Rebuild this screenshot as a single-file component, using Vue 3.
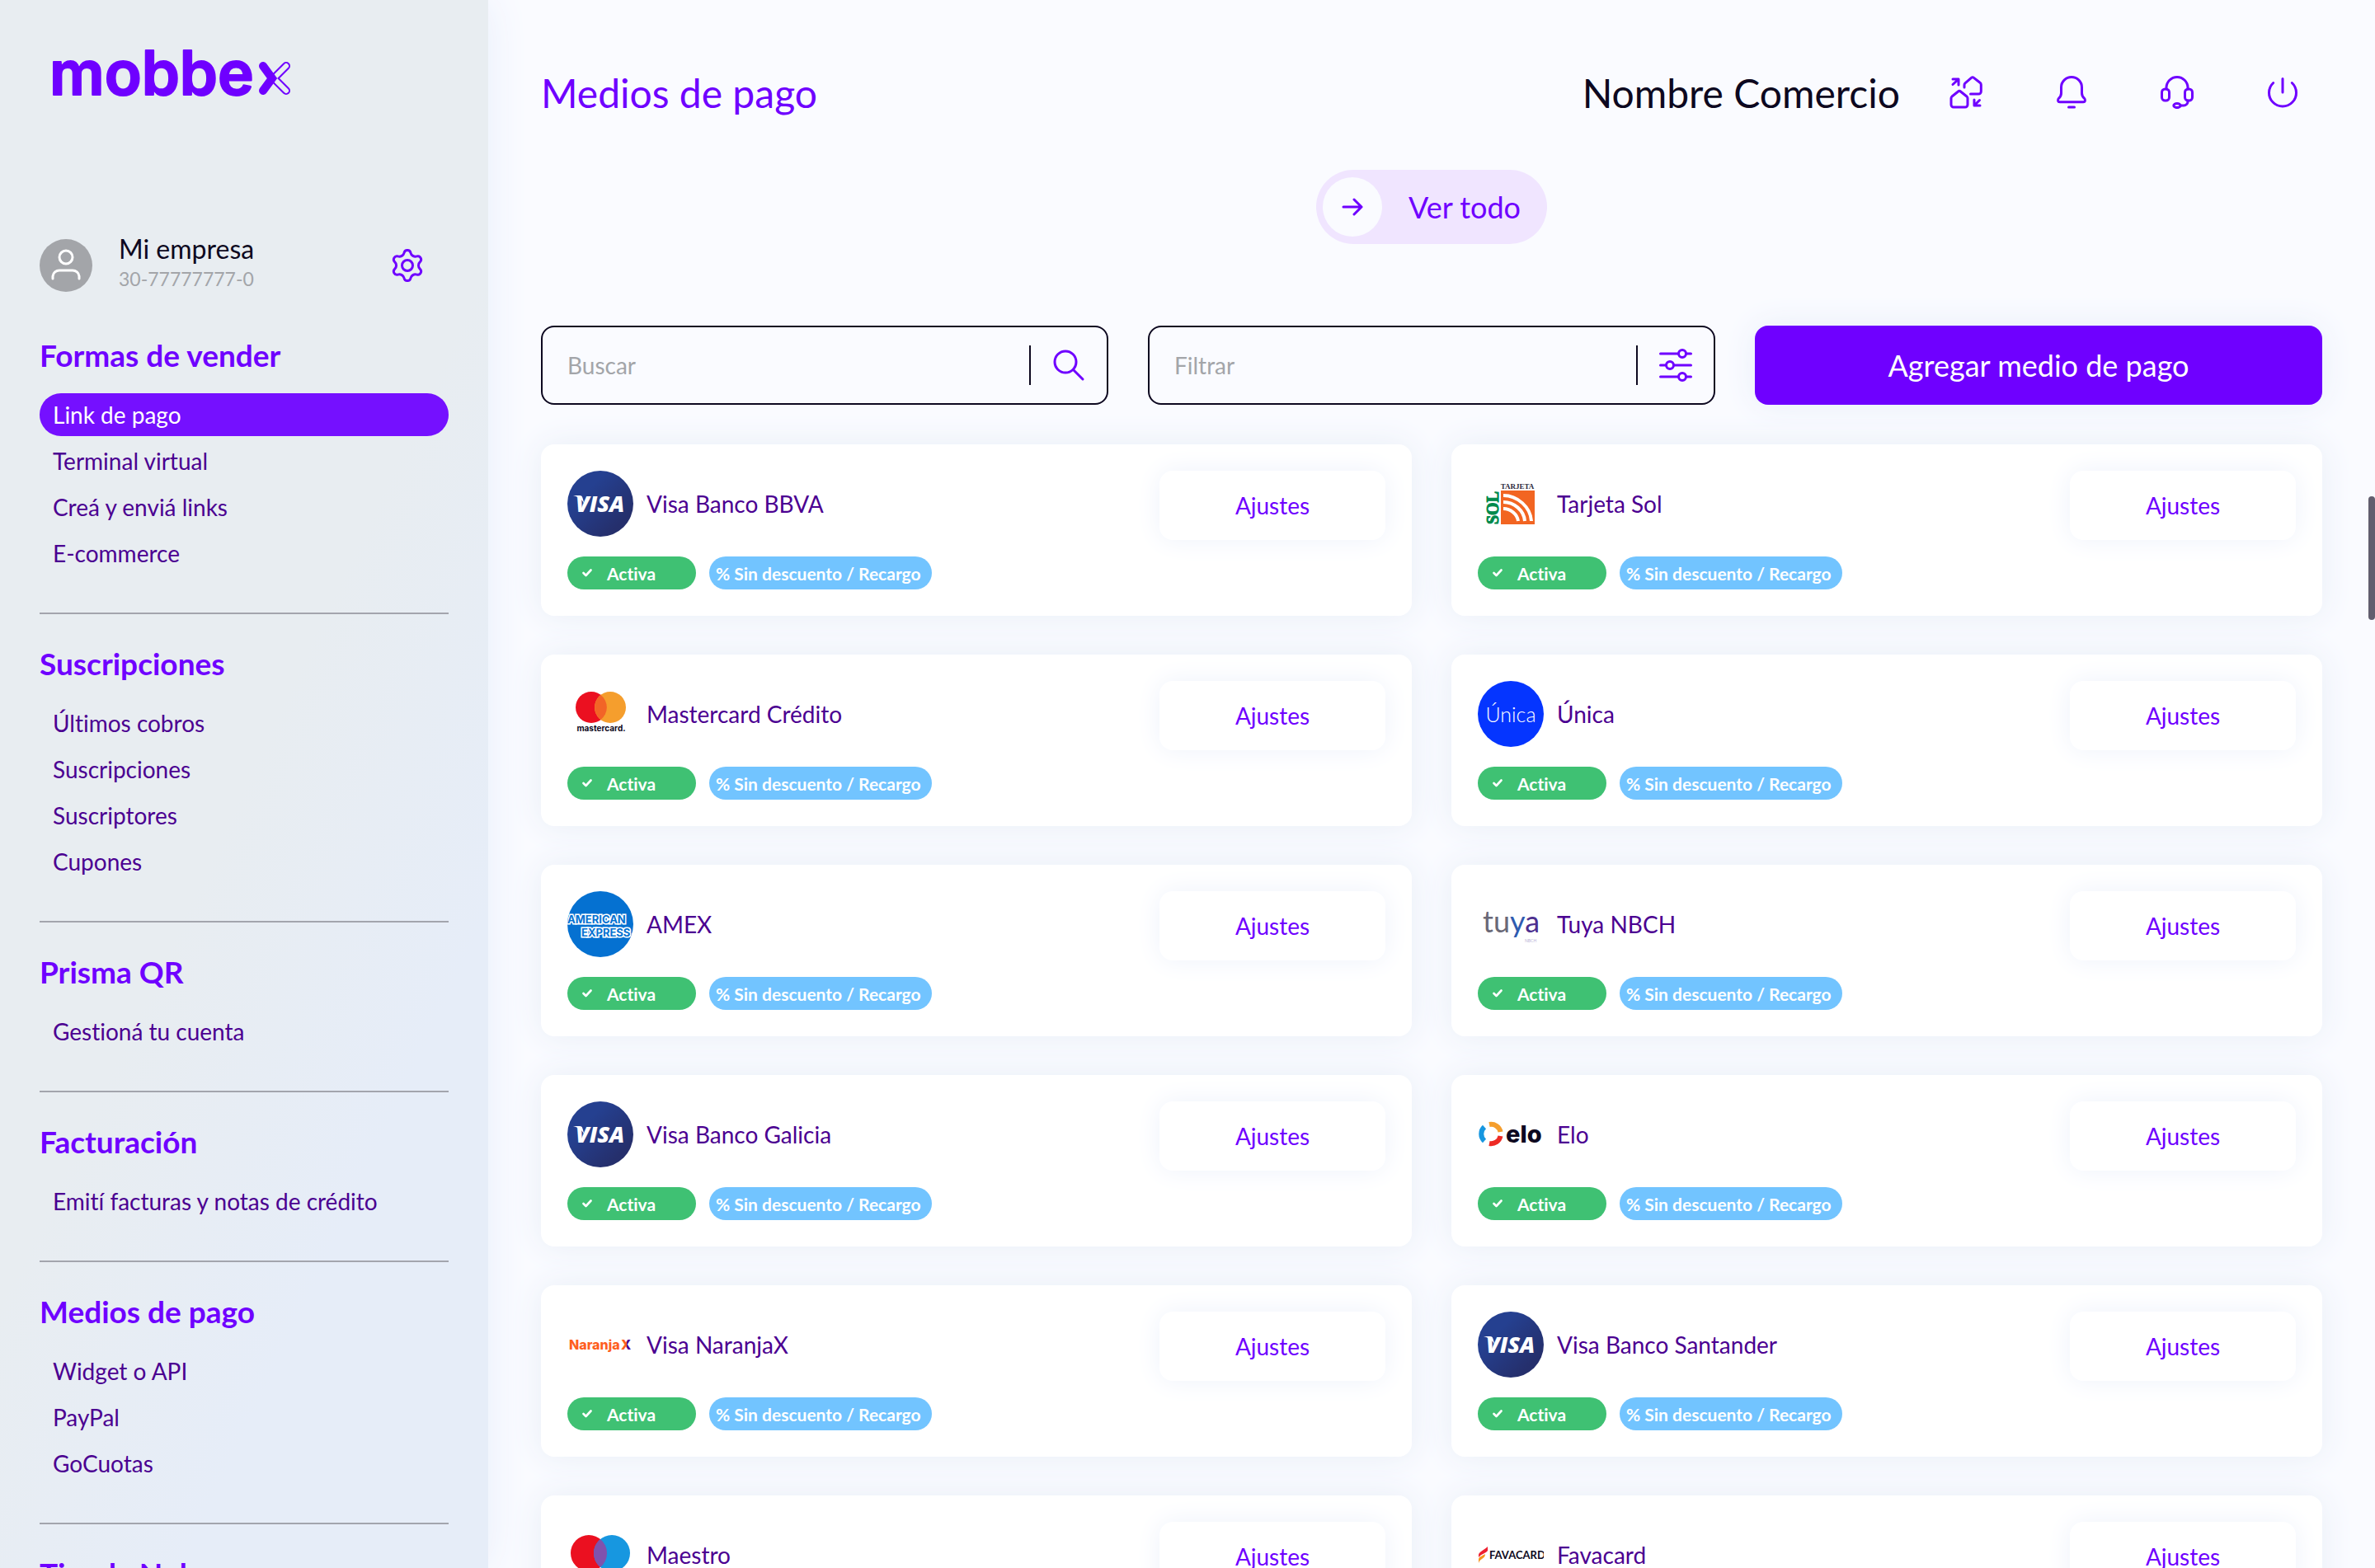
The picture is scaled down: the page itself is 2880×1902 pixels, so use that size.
<script setup>
import { ref } from "vue";

const search = ref("");
const filter = ref("");

const sections = [
  {
    title: "Formas de vender",
    links: ["Link de pago", "Terminal virtual", "Creá y enviá links", "E-commerce"],
  },
  {
    title: "Suscripciones",
    links: ["Últimos cobros", "Suscripciones", "Suscriptores", "Cupones"],
  },
  { title: "Prisma QR", links: ["Gestioná tu cuenta"] },
  { title: "Facturación", links: ["Emití facturas y notas de crédito"] },
  { title: "Medios de pago", links: ["Widget o API", "PayPal", "GoCuotas"] },
  { title: "Tienda Nube", links: [] },
];

const active = ref("Link de pago");

const methods = [
  { name: "Visa Banco BBVA", brand: "visa" },
  { name: "Tarjeta Sol", brand: "sol" },
  { name: "Mastercard Crédito", brand: "mastercard" },
  { name: "Única", brand: "unica" },
  { name: "AMEX", brand: "amex" },
  { name: "Tuya NBCH", brand: "tuya" },
  { name: "Visa Banco Galicia", brand: "visa" },
  { name: "Elo", brand: "elo" },
  { name: "Visa NaranjaX", brand: "naranja" },
  { name: "Visa Banco Santander", brand: "visa" },
  { name: "Maestro", brand: "maestro" },
  { name: "Favacard", brand: "favacard" },
];

// six rounded teeth around (20, 20)
const point = (deg, r) => {
  const rad = (deg * Math.PI) / 180;
  return `${(20 + r * Math.cos(rad)).toFixed(2)} ${(20 + r * Math.sin(rad)).toFixed(2)}`;
};
let gear = `M${point(-104, 16)}`;
for (let k = 0; k < 6; k++) {
  const a = -90 + k * 60;
  gear += `A4 4 0 0 1 ${point(a + 14, 16)}A6 6 0 0 0 ${point(a + 46, 16)}`;
}
gear += "Z";
</script>

<template>
  <div class="layout">
    <aside class="sidebar">
      <a href="#" class="brand" aria-label="mobbex">
        <svg viewBox="0 0 290 54" width="290" height="54">
          <text class="wordmark" x="-4" y="51">mobbe</text>
          <g stroke-linecap="round" fill="none">
            <path d="M283 16L268 31L283 46" stroke="#6f00ff" stroke-width="10" />
            <path d="M283 16L268 31L283 46" stroke="#e8edf1" stroke-width="6" />
            <path d="M255 16L266 31L255 46" stroke="#6f00ff" stroke-width="10" />
          </g>
        </svg>
      </a>

      <div class="company">
        <svg class="avatar" viewBox="0 0 64 64" width="64" height="64">
          <circle cx="32" cy="32" r="32" fill="#a3a5a9" />
          <g fill="none" stroke="#fff" stroke-width="3" stroke-linecap="round">
            <circle cx="32" cy="22" r="8" />
            <path d="M16 48v-3a8 8 0 0 1 8-7h16a8 8 0 0 1 8 7v3" />
          </g>
        </svg>
        <div class="company-data">
          <span class="company-name">Mi empresa</span>
          <span class="company-id">30-77777777-0</span>
        </div>
        <button class="icon-btn" aria-label="Configuración">
          <svg class="icon" viewBox="0 0 40 40" width="40" height="40">
            <path :d="gear" />
            <circle cx="20" cy="20" r="6.500" />
          </svg>
        </button>
      </div>

      <nav>
        <section v-for="s in sections" :key="s.title" class="group">
          <h2>{{ s.title }}</h2>
          <ul>
            <li v-for="l in s.links" :key="l">
              <a href="#" :class="{ active: l === active }" @click.prevent="active = l">{{ l }}</a>
            </li>
          </ul>
        </section>
      </nav>
    </aside>

    <main class="content">
      <header class="topbar">
        <h1>Medios de pago</h1>
        <span class="shop">Nombre Comercio</span>
        <div class="actions">
          <button class="icon-btn" aria-label="Cambiar comercio">
            <svg class="icon" viewBox="0 0 40 40" width="40" height="40">
              <path d="M10.500 19l-7.500 6a3 3 0 0 0-1 2.200V35a3 3 0 0 0 3 3h14a3 3 0 0 0 3-3v-7.800a3 3 0 0 0-1-2.200l-7.500-6a2.400 2.400 0 0 0-3 0z" />
              <path d="M18 14v-3a3 3 0 0 1 1-2.200l7.500-6.400a2.400 2.400 0 0 1 3 0L37 8.300a3 3 0 0 1 1.300 2.400V19a3 3 0 0 1-3 3H25.500" />
              <path d="M4 4h7v7M11 4L4 10.500M30 29v7h7M30 36l6.500-6.500" />
            </svg>
          </button>
          <button class="icon-btn" aria-label="Notificaciones">
            <svg class="icon" viewBox="0 0 40 40" width="40" height="40">
              <path d="M7.500 14a12.500 12.500 0 0 1 25 0v7c0 3 .8 4.200 3 6.300c2 2 1 4.500-1.300 4.500H5.800c-2.300 0-3.300-2.500-1.300-4.500c2.200-2.100 3-3.300 3-6.300z" />
              <path d="M16.500 38h7" />
            </svg>
          </button>
          <button class="icon-btn" aria-label="Soporte">
            <svg class="icon" viewBox="0 0 40 40" width="40" height="40">
              <rect x="1.500" y="16" width="9" height="14" rx="4" />
              <rect x="29.500" y="16" width="9" height="14" rx="4" />
              <path d="M7 16v-1.500a13 13 0 0 1 26 0V16M33 30v1.500a5 5 0 0 1-5 4.500h-4" />
              <ellipse cx="20" cy="36" rx="4.200" ry="2.600" />
            </svg>
          </button>
          <button class="icon-btn" aria-label="Salir">
            <svg class="icon" viewBox="0 0 40 40" width="40" height="40">
              <path d="M8.700 8.500a16.500 16.500 0 1 0 22.600 0M20 3.500V20" />
            </svg>
          </button>
        </div>
      </header>

      <button class="see-all">
        <span class="see-all-icon">
          <svg class="icon" viewBox="0 0 28 28" width="28" height="28">
            <path d="M3 14h22M16 5l9 9l-9 9" />
          </svg>
        </span>
        Ver todo
      </button>

      <div class="filters">
        <label class="field">
          <input v-model="search" type="text" placeholder="Buscar" aria-label="Buscar" />
          <svg class="icon" viewBox="0 0 40 40" width="40" height="40">
            <circle cx="16" cy="16" r="13" />
            <path d="M25.500 25.500L37 37" />
          </svg>
        </label>
        <label class="field">
          <input v-model="filter" type="text" placeholder="Filtrar" aria-label="Filtrar" />
          <svg class="icon" viewBox="0 0 40 40" width="40" height="40">
            <path d="M1.500 6H23M33 6h5.500M1.500 20H8M18 20h20.500M1.500 34H23M33 34h5.500" />
            <circle cx="28" cy="6" r="4.500" />
            <circle cx="13" cy="20" r="4.500" />
            <circle cx="28" cy="34" r="4.500" />
          </svg>
        </label>
        <button class="add">Agregar medio de pago</button>
      </div>

      <div class="cards">
        <article v-for="m in methods" :key="m.name" class="card">
          <div class="card-head">
            <svg class="logo" viewBox="0 0 80 80" width="80" height="80" aria-hidden="true">
              <g v-if="m.brand === 'visa'">
                <defs>
                  <linearGradient id="visa-bg" x1="0" y1="0" x2="1" y2="1">
                    <stop offset="0.300" stop-color="#254090" />
                    <stop offset="0.800" stop-color="#252f6c" />
                  </linearGradient>
                </defs>
                <circle cx="40" cy="40" r="40" fill="url(#visa-bg)" />
                <path d="M7 30h8c2 0 3 1 3.500 3l2 7c-2-4-6-8-13.500-10z" fill="#fff" />
                <text class="visa-text" x="10" y="50">VISA</text>
              </g>
              <g v-else-if="m.brand === 'sol'">
                <text class="sol-top" x="48" y="22" text-anchor="middle">TARJETA</text>
                <text class="sol-side" transform="rotate(-90)" x="-65" y="25">SOL</text>
                <rect x="28" y="24" width="41" height="41" fill="#f26522" />
                <g fill="none" stroke="#fff" stroke-width="4">
                  <path d="M31 30c17 0 33 14 34 31" />
                  <path d="M31 38c13 0 25 10 26 23" />
                  <path d="M31 46c9 0 17 7 18 15" />
                </g>
              </g>
              <g v-else-if="m.brand === 'mastercard'">
                <circle cx="29" cy="32" r="19" fill="#eb1020" />
                <circle cx="52" cy="32" r="19" fill="#f59e2d" />
                <path d="M40.500 17a19 19 0 0 1 0 30a19 19 0 0 1 0-30z" fill="#f26427" />
                <text class="mc-text" x="41" y="61" text-anchor="middle">mastercard.</text>
              </g>
              <g v-else-if="m.brand === 'unica'">
                <circle cx="40" cy="40" r="40" fill="#0535ff" />
                <text class="unica-text" x="40" y="50" text-anchor="middle">Única</text>
              </g>
              <g v-else-if="m.brand === 'amex'">
                <clipPath id="amex-clip"><circle cx="40" cy="40" r="40" /></clipPath>
                <g clip-path="url(#amex-clip)">
                  <rect width="80" height="80" fill="#0571d1" />
                  <text class="amex-text" x="0" y="39">AMERICAN</text>
                  <text class="amex-text" x="17" y="55">EXPRESS</text>
                </g>
              </g>
              <g v-else-if="m.brand === 'tuya'">
                <text class="tuya-text" x="6" y="50" fill="#6a6876">tu<tspan fill="#2f5bb0">y</tspan><tspan fill="#4d2f8f">a</tspan></text>
                <text class="tuya-sub" x="57" y="62">NBCH</text>
              </g>
              <g v-else-if="m.brand === 'elo'">
                <g fill="none" stroke-width="6">
                  <path d="M14 28a11.500 11.500 0 0 1 13.500 9" stroke="#f59e2d" />
                  <path d="M27.500 42a11.500 11.500 0 0 1-13.500 9" stroke="#ee2a24" />
                  <path d="M8 48a11.500 11.500 0 0 1 0-17" stroke="#1797e0" />
                </g>
                <text class="elo-text" x="34" y="50">elo</text>
              </g>
              <g v-else-if="m.brand === 'naranja'">
                <defs>
                  <linearGradient id="naranja-x">
                    <stop offset="0.550" stop-color="#fe5e1f" />
                    <stop offset="0.550" stop-color="#4b0091" />
                  </linearGradient>
                </defs>
                <text class="naranja-text" x="2" y="46">Naranja</text>
                <text class="naranja-text naranja-mark" x="65" y="46">X</text>
              </g>
              <g v-else-if="m.brand === 'maestro'">
                <circle cx="26" cy="38" r="22" fill="#eb1020" />
                <circle cx="54" cy="38" r="22" fill="#1797e0" />
                <path d="M40 21a22 22 0 0 1 0 34a22 22 0 0 1 0-34z" fill="#8052ad" />
                <text class="mc-text" x="40" y="71" text-anchor="middle">maestro</text>
              </g>
              <g v-else>
                <path d="M1 40c0-3 8-7 11-10v5c-2 3-8 4-11 8z" fill="#ee2030" />
                <path d="M1 50v-5c1-3 5-4 8-6c0 6-6 5-8 11z" fill="#f7941d" />
                <text class="fava-text" x="14" y="45">FAVACARD</text>
              </g>
            </svg>
            <h3>{{ m.name }}</h3>
            <button class="settings">Ajustes</button>
          </div>
          <div class="tags">
            <span class="tag tag-active">
              <svg viewBox="0 0 12 10" width="12" height="10">
                <path d="M1.500 5l3 3l6-6.500" fill="none" stroke="#fff" stroke-width="2.600" stroke-linecap="round" stroke-linejoin="round" />
              </svg>
              Activa
            </span>
            <span class="tag tag-info">% Sin descuento / Recargo</span>
          </div>
        </article>
      </div>
    </main>
    <div class="scroll-thumb"></div>
  </div>
</template>

<style>
body {
  margin: 0;
  overflow: hidden;
}
</style>

<style scoped>
.layout {
  position: relative;
  display: flex;
  height: 100vh;
  overflow: hidden;
  background: #fafbff;
  font-family: Lato, "Liberation Sans", sans-serif;
  font-variant-ligatures: none;
}

h1,
h2,
h3,
ul {
  margin: 0;
  padding: 0;
  list-style: none;
}

a {
  text-decoration: none;
}

button {
  font-family: inherit;
  border: none;
  cursor: pointer;
}

.icon {
  display: block;
  fill: none;
  stroke: #6f00ff;
  stroke-width: 3;
  stroke-linecap: round;
  stroke-linejoin: round;
}

.icon-btn {
  padding: 0;
  background: none;
}

/* sidebar */

.sidebar {
  flex: none;
  width: 592px;
  box-sizing: border-box;
  padding: 64px 48px 0;
  background: linear-gradient(115deg, #e8edf1 50%, #e6edf8 75%);
  box-shadow: 0 0 48px #e8eefa;
}

.brand {
  display: block;
  height: 54px;
  margin-left: 16px;
}

.brand svg {
  display: block;
  overflow: visible;
}

.wordmark {
  font: 600 74px Inter, sans-serif;
  fill: #6f00ff;
  stroke: #6f00ff;
  stroke-width: 2;
  stroke-linejoin: round;
}

.company {
  display: flex;
  align-items: center;
  height: 72px;
  margin-top: 168px;
  margin-bottom: 51px;
  padding-right: 30px;
}

.company-data {
  flex: 1;
  display: flex;
  flex-direction: column;
  margin-left: 32px;
  padding-bottom: 8px;
}

.company-name {
  font-size: 32px;
  line-height: 40px;
  color: #0d0820;
}

.company-id {
  font-size: 23px;
  line-height: 32px;
  color: #a3a5a9;
}

.group {
  margin-bottom: 38px;
  padding-bottom: 46px;
  border-bottom: 2px solid #a3a5ad;
}

.group h2 {
  margin-bottom: 24px;
  font-size: 37px;
  font-weight: 700;
  line-height: 44px;
  color: #6f00ff;
}

.group ul {
  display: flex;
  flex-direction: column;
  gap: 4px;
}

.group a {
  display: block;
  padding: 0 16px;
  border-radius: 26px;
  font-size: 28px;
  line-height: 52px;
  color: #4b0091;
}

.group a.active {
  background: #7510ff;
  color: #fff;
}

/* content */

.content {
  flex: 1;
  min-width: 0;
  padding: 80px 64px 0;
}

.topbar {
  display: flex;
  align-items: center;
  height: 64px;
  padding-right: 28px;
}

.topbar h1 {
  flex: 1;
  font-size: 48px;
  font-weight: 400;
  color: #6f00ff;
}

.shop {
  font-size: 48px;
  color: #0d0820;
}

.actions {
  display: flex;
  gap: 88px;
  margin-left: 60px;
}

.see-all {
  display: flex;
  align-items: center;
  gap: 32px;
  height: 90px;
  margin: 62px auto 0;
  padding: 0 32px 0 8px;
  border-radius: 45px;
  background: #f0e5ff;
  font-size: 36px;
  color: #6f00ff;
}

.see-all-icon {
  display: flex;
  align-items: center;
  justify-content: center;
  width: 72px;
  height: 72px;
  border-radius: 50%;
  background: #fafbff;
}

.filters {
  display: grid;
  grid-template-columns: repeat(3, 1fr);
  gap: 48px;
  margin-top: 99px;
}

.field {
  display: flex;
  align-items: center;
  height: 96px;
  box-sizing: border-box;
  padding: 0 26px 0 30px;
  border: 2px solid #0d0820;
  border-radius: 16px;
}

.field input {
  flex: 1;
  min-width: 0;
  height: 48px;
  padding: 0;
  border: none;
  border-right: 2px solid #0d0820;
  outline: none;
  background: none;
  font: inherit;
  font-size: 28px;
}

.field input::placeholder {
  color: #a3a5a9;
  opacity: 1;
}

.field .icon {
  flex: none;
  margin-left: 26px;
}

.add {
  height: 96px;
  border-radius: 16px;
  background: #6f00ff;
  box-shadow: 0 0 40px #e8eef8;
  font-size: 36px;
  color: #fff;
}

.cards {
  display: grid;
  grid-template-columns: repeat(2, 1fr);
  gap: 47px 48px;
  margin-top: 48px;
}

.card {
  height: 208px;
  box-sizing: border-box;
  padding: 32px;
  border-radius: 16px;
  background: #fff;
  box-shadow: 0 0 40px #e8eef6;
}

.card-head {
  display: flex;
  align-items: flex-start;
  height: 84px;
}

.card h3 {
  flex: 1;
  margin-left: 16px;
  font-size: 28px;
  font-weight: 400;
  line-height: 80px;
  color: #4b0091;
}

.settings {
  width: 274px;
  height: 84px;
  border-radius: 16px;
  background: #fff;
  box-shadow: 0 0 32px #eef2fb;
  font-size: 28px;
  color: #6f00ff;
}

.tags {
  display: flex;
  gap: 16px;
  margin-top: 20px;
}

.tag {
  display: flex;
  align-items: center;
  height: 40px;
  box-sizing: border-box;
  border-radius: 20px;
  font-size: 21px;
  font-weight: 700;
  white-space: nowrap;
  color: #fff;
}

.tag-active {
  gap: 18px;
  width: 156px;
  padding-left: 18px;
  background: #3fc173;
}

.tag-info {
  width: 270px;
  padding-left: 8px;
  background: #72c4ff;
}

.scroll-thumb {
  position: absolute;
  top: 602px;
  right: 0;
  width: 8px;
  height: 150px;
  border-radius: 4px;
  background: #625e6e;
}

/* card brands */

.logo {
  flex: none;
}

.visa-text {
  font: italic 800 27px "Open Sans", sans-serif;
  fill: #fff;
}

.sol-top {
  font: 700 9px "Liberation Serif", serif;
  fill: #2d2a3c;
}

.sol-side {
  font: 700 20px "Liberation Serif", serif;
  fill: #008a4b;
  stroke: #008a4b;
}

.mc-text {
  font: 700 10px Inter, sans-serif;
  fill: #0d0820;
}

.unica-text {
  font: 300 25px Lato, sans-serif;
  fill: #fff;
}

.amex-text {
  font: 700 13px Inter, sans-serif;
  fill: #0571d1;
  stroke: #fff;
  stroke-width: 3;
  paint-order: stroke;
}

.tuya-text {
  font: 400 36px Lato, sans-serif;
}

.tuya-sub {
  font: 400 5px Lato, sans-serif;
  fill: #b9b3d6;
}

.elo-text {
  font: 800 29px Inter, sans-serif;
  fill: #0d0820;
}

.naranja-text {
  font: 800 16px Inter, sans-serif;
  fill: #fe5e1f;
}

.naranja-mark {
  fill: url(#naranja-x);
}

.fava-text {
  font: 700 13px Lato, sans-serif;
  fill: #0d0820;
}
</style>
